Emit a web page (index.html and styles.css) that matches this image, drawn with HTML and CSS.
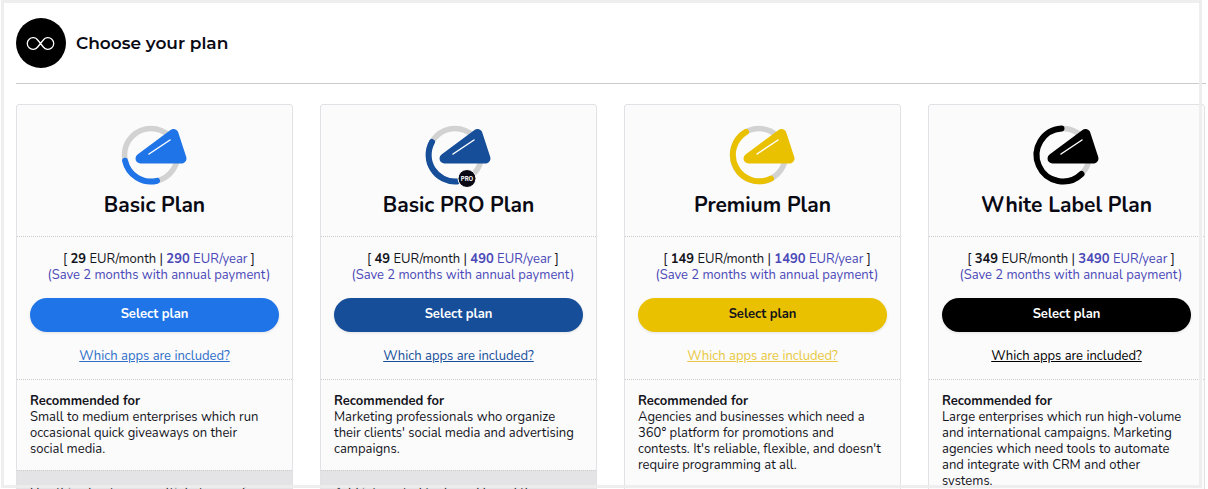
FILE: index.html
```html
<!DOCTYPE html>
<html lang="en">
<head>
    <meta charset="UTF-8">
    <meta name="viewport" content="width=device-width, initial-scale=1.0">
    <title>Choose your plan</title>
    <link rel="stylesheet" href="styles.css">
</head>
<body>
    <header>
        <svg class="logo" viewBox="0 0 50 50" aria-hidden="true">
            <circle cx="25" cy="25" r="25" fill="#000"/>
            <path d="M24.500 25.500L21.700 22A5.800 5.800 0 1 0 21.700 29L27.300 22A5.800 5.800 0 1 1 27.300 29Z" fill="none" stroke="#fff" stroke-width="1.300" stroke-linejoin="round"/>
        </svg>
        <h1>Choose your plan</h1>
    </header>
    <main class="plans">
        <section class="plan basic">
            <div class="plan-head">
                <svg class="plan-icon" viewBox="1 0 66 60" aria-hidden="true">
                    <circle class="ring" cx="30" cy="30" r="26.5"/>
                    <path class="progress" d="M4.1 35.800A26.5 26.5 0 0 0 36 55.800"/>
                    <path class="shape" d="M19.500 33.500L52.500 9L60.500 33.500Z"/>
                    <path class="shine" d="M28 29L49 15"/>
                </svg>
                <h2>Basic Plan</h2>
            </div>
            <div class="plan-price">
                <p>[ <b>29</b> EUR/month | <span class="annual"><b>290</b> EUR/year</span> ]</p>
                <p class="annual">(Save 2 months with annual payment)</p>
                <button type="button">Select plan</button>
                <a href="#apps">Which apps are included?</a>
            </div>
            <div class="plan-text">
                <h3>Recommended for</h3>
                <p>Small to medium enterprises which run occasional quick giveaways on their social&nbsp;media.</p>
            </div>
            <div class="plan-note">Use this plan to run multiple types of</div>
        </section>
        <section class="plan pro">
            <div class="plan-head">
                <svg class="plan-icon" viewBox="1 0 66 60" aria-hidden="true">
                    <circle class="ring" cx="30" cy="30" r="26.5"/>
                    <path class="progress" d="M7 17A26.5 26.5 0 0 0 32 56.400"/>
                    <path class="shape" d="M19.500 33.500L52.500 9L60.500 33.500Z"/>
                    <path class="shine" d="M28 29L49 15"/>
                    <circle cx="42" cy="53.5" r="9" fill="#0a0a14" stroke="#fff"/>
                    <text class="badge" x="42" y="56" text-anchor="middle">PRO</text>
                </svg>
                <h2>Basic PRO Plan</h2>
            </div>
            <div class="plan-price">
                <p>[ <b>49</b> EUR/month | <span class="annual"><b>490</b> EUR/year</span> ]</p>
                <p class="annual">(Save 2 months with annual payment)</p>
                <button type="button">Select plan</button>
                <a href="#apps">Which apps are included?</a>
            </div>
            <div class="plan-text">
                <h3>Recommended for</h3>
                <p>Marketing professionals who organize their clients' social media and advertising campaigns.</p>
            </div>
            <div class="plan-note">Add integrated tools and brand the</div>
        </section>
        <section class="plan premium">
            <div class="plan-head">
                <svg class="plan-icon" viewBox="1 0 66 60" aria-hidden="true">
                    <circle class="ring" cx="30" cy="30" r="26.5"/>
                    <path class="progress" d="M17.1 6.850A26.5 26.5 0 0 0 42 53.600"/>
                    <path class="shape" d="M19.500 33.500L52.500 9L60.500 33.500Z"/>
                    <path class="shine" d="M28 29L49 15"/>
                </svg>
                <h2>Premium Plan</h2>
            </div>
            <div class="plan-price">
                <p>[ <b>149</b> EUR/month | <span class="annual"><b>1490</b> EUR/year</span> ]</p>
                <p class="annual">(Save 2 months with annual payment)</p>
                <button type="button">Select plan</button>
                <a href="#apps">Which apps are included?</a>
            </div>
            <div class="plan-text">
                <h3>Recommended for</h3>
                <p>Agencies and businesses which need a 360° platform for promotions and contests. It's reliable, flexible, and doesn't require programming at all.</p>
            </div>
        </section>
        <section class="plan white-label">
            <div class="plan-head">
                <svg class="plan-icon" viewBox="1 0 66 60" aria-hidden="true">
                    <circle class="ring" cx="30" cy="30" r="26.5"/>
                    <path class="progress" d="M28.500 3.500A26.5 26.5 0 1 0 48.500 49"/>
                    <path class="shape" d="M19.500 33.500L52.500 9L60.500 33.500Z"/>
                    <path class="shine" d="M28 29L49 15"/>
                </svg>
                <h2>White Label Plan</h2>
            </div>
            <div class="plan-price">
                <p>[ <b>349</b> EUR/month | <span class="annual"><b>3490</b> EUR/year</span> ]</p>
                <p class="annual">(Save 2 months with annual payment)</p>
                <button type="button">Select plan</button>
                <a href="#apps">Which apps are included?</a>
            </div>
            <div class="plan-text">
                <h3>Recommended for</h3>
                <p>Large enterprises which run high-volume and international campaigns. Marketing agencies which need tools to automate and integrate with CRM and other systems.</p>
            </div>
        </section>
    </main>
    <div class="frame"></div>
</body>
</html>
```

FILE: styles.css
```css
* {
    box-sizing: border-box;
}
html {
    height: 100%;
    overflow: hidden;
}
body {
    margin: 0;
    padding: 18px 2px 0 16px;
    font-family: Nunito, Lato, sans-serif;
    font-size: 13px;
    line-height: 16px;
    color: #14141c;
    background-color: #fff;
}
h1, h2, h3, p {
    margin: 0;
}
header {
    display: flex;
    align-items: center;
    gap: 10px;
    padding-bottom: 15px;
    border-bottom: 1px solid #ccc;
}
.logo {
    width: 50px;
    height: 50px;
}
h1 {
    font-family: Montserrat, Inter, sans-serif;
    font-size: 17px;
    font-weight: 600;
    line-height: 24px;
    color: #0a0a14;
}
.plans {
    display: grid;
    grid-template-columns: repeat(4, 1fr);
    gap: 27px;
    margin-top: 20px;
    margin-right: 1px;
}
.plan {
    --color: #1f74e8;
    --button-text: #fff;
    --link: #2d6fc8;
    border: 1px solid #e2e2e6;
    border-radius: 3px;
    background-color: #fbfbfb;
}
.pro {
    --color: #164e9a;
    --link: #164e9a;
}
.premium {
    --color: #e9c100;
    --button-text: #14141c;
    --link: #e9c840;
}
.white-label {
    --color: #000;
    --link: #000;
}
.plan-head {
    display: flex;
    flex-direction: column;
    align-items: center;
    padding: 20px 13px 17px;
}
.plan-icon {
    width: 66px;
    height: 60px;
    overflow: visible;
}
.ring {
    fill: none;
    stroke: #d2d2d2;
    stroke-width: 5.5;
}
.progress {
    fill: none;
    stroke: var(--color);
    stroke-width: 6;
    stroke-linecap: round;
}
.shape {
    fill: var(--color);
    stroke: var(--color);
    stroke-width: 10;
    stroke-linejoin: round;
}
.shine {
    stroke: #fff;
    stroke-width: 1.5;
    stroke-linecap: round;
}
.badge {
    font-family: Inter, sans-serif;
    font-size: 6px;
    font-weight: bold;
    fill: #fff;
}
h2 {
    margin-top: 6px;
    font-size: 21px;
    line-height: 28px;
    color: #0a0a14;
}
.plan-price {
    display: flex;
    flex-direction: column;
    align-items: center;
    padding: 14px 13px 15px;
    border-top: 1px dotted #ccc;
    border-bottom: 1px dotted #ccc;
    white-space: nowrap;
}
.plan-price p {
    padding-left: 9px;
}
.annual {
    color: #4a48b8;
}
button {
    align-self: stretch;
    height: 34px;
    margin: 15px 0 16px;
    padding: 0 0 2px;
    border: none;
    border-radius: 17px;
    font: bold 13px Nunito, Lato, sans-serif;
    color: var(--button-text);
    background-color: var(--color);
    box-shadow: 0 1px 3px rgba(0, 0, 0, 0.1);
    cursor: pointer;
}
.plan-price a {
    color: var(--link);
}
.plan-text {
    padding: 13px;
}
.plan-text h3 {
    font-size: 13px;
}
.plan-note {
    padding: 14px 13px;
    border-top: 1px dotted #ccc;
    background-color: #e4e4e6;
}
.frame {
    position: fixed;
    inset: 0 6px 1px 1px;
    border: 3px solid rgba(236, 236, 236, 0.9);
    pointer-events: none;
}
```
